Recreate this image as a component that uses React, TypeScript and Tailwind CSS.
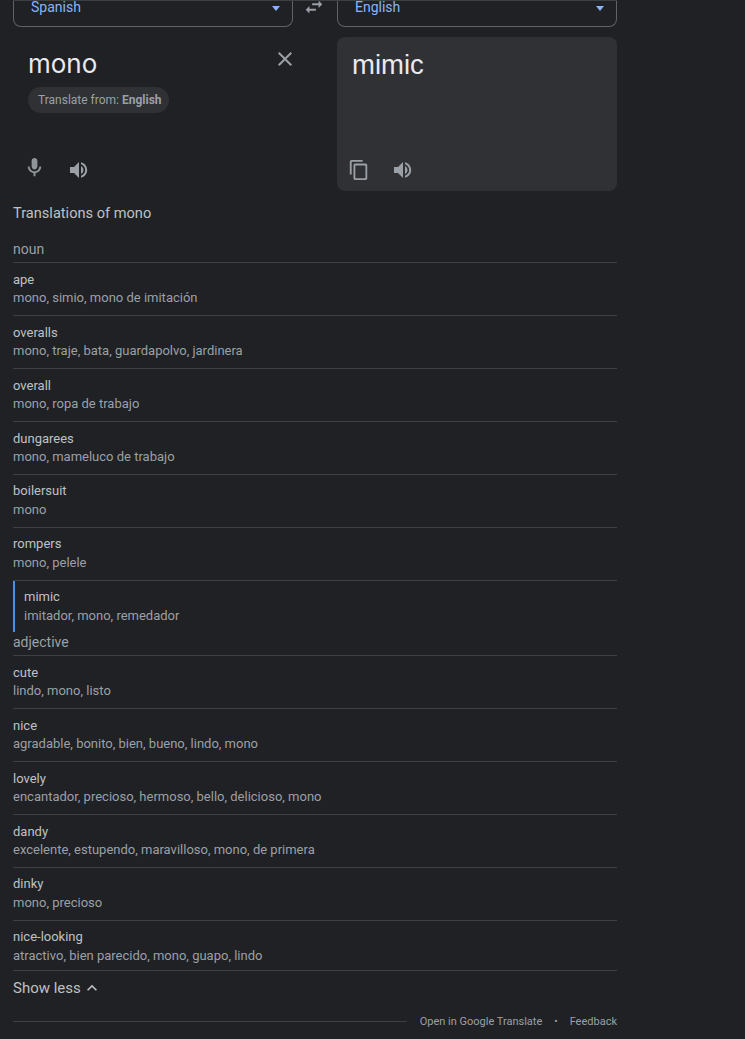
import React from "react";

const ICONS = {
  mic: "M12 14c1.66 0 3-1.34 3-3V5c0-1.66-1.34-3-3-3S9 3.34 9 5v6c0 1.66 1.34 3 3 3z M17 11c0 2.76-2.24 5-5 5s-5-2.24-5-5H5c0 3.53 2.61 6.43 6 6.92V21h2v-3.08c3.39-.49 6-3.39 6-6.92h-2z",
  volume: "M3 9v6h4l5 5V4L7 9H3zm13.5 3c0-1.77-1.02-3.29-2.5-4.03v8.05c1.48-.73 2.5-2.25 2.5-4.02z M14 4.2v2.1c2.4.8 4.2 3 4.2 5.7s-1.8 4.9-4.2 5.7v2.1c3.5-.9 6.2-4 6.2-7.8s-2.7-6.9-6.2-7.8z",
  copy: "M16 1H4c-1.1 0-2 .9-2 2v14h2V3h12V1zm3 4H8c-1.1 0-2 .9-2 2v14c0 1.1.9 2 2 2h11c1.1 0 2-.9 2-2V7c0-1.1-.9-2-2-2zm0 16H8V7h11v14z",
  swap: "M6.99 11L3 15l3.99 4v-3H14v-2H6.99v-3zM21 9l-3.99-4v3H10v2h7.01v3L21 9z",
  close: "M19 6.41L17.59 5 12 10.59 6.41 5 5 6.41 10.59 12 5 17.59 6.41 19 12 13.41 17.59 19 19 17.59 13.41 12z",
  up: "M7.41 15.41L12 10.83l4.59 4.58L18 14l-6-6-6 6z",
};

const Icon: React.FC<{ name: keyof typeof ICONS; className?: string }> = ({ name, className }) => (
  <svg viewBox="0 0 24 24" className={className} fill="currentColor" aria-hidden="true">
    <path d={ICONS[name]} />
  </svg>
);

// tight rows sit a pixel higher in the reference (fractional row heights)
const NOUNS = [
  { word: "ape", list: "mono, simio, mono de imitación" },
  { word: "overalls", list: "mono, traje, bata, guardapolvo, jardinera" },
  { word: "overall", list: "mono, ropa de trabajo" },
  { word: "dungarees", list: "mono, mameluco de trabajo" },
  { word: "boilersuit", list: "mono", tight: true },
  { word: "rompers", list: "mono, pelele", tight: true },
];

const ADJECTIVES = [
  { word: "cute", list: "lindo, mono, listo" },
  { word: "nice", list: "agradable, bonito, bien, bueno, lindo, mono" },
  { word: "lovely", list: "encantador, precioso, hermoso, bello, delicioso, mono" },
  { word: "dandy", list: "excelente, estupendo, maravilloso, mono, de primera" },
  { word: "dinky", list: "mono, precioso", tight: true },
  { word: "nice-looking", list: "atractivo, bien parecido, mono, guapo, lindo", tight: true },
];

const LangSelect: React.FC<{ label: string }> = ({ label }) => (
  <div className="w-[280px] h-[26px] border border-t-0 border-[#5f6368] rounded-b-lg flex items-start justify-between pl-[17px] pr-[12px]">
    <span className="text-[14px] leading-[16px] -mt-[2px] text-[#8ab4f8]">{label}</span>
    <span className="mt-[5px] w-0 h-0 border-x-[4px] border-x-transparent border-t-[5px] border-t-[#8ab4f8]" />
  </div>
);

const Row: React.FC<{ word: string; list: string; tight?: boolean; last?: boolean }> = ({ word, list, tight, last }) => (
  <div className={`${last ? "h-[50px]" : "h-[53px]"} border-b border-[#3c4043] ${tight ? "pt-[7px]" : "pt-[8px]"}`}>
    <div className="text-[13px] leading-[18px] text-[#bdc1c6]">{word}</div>
    <div className={`text-[13px] leading-[18px] text-[#9aa0a6] ${tight ? "mt-[1px]" : ""}`}>{list}</div>
  </div>
);

export default function App() {
  return (
    <div className="min-h-[1039px] bg-[#202124] pl-[13px] font-['Roboto',sans-serif]">
      <div className="w-[604px]">
        <div className="flex items-start border-t border-t-[#3c4043]">
          <LangSelect label="Spanish" />
          <div className="w-[44px] pl-[10px] h-[26px] overflow-hidden">
            <Icon name="swap" className="w-[22px] h-[22px] -mt-[5px] text-[#9aa0a6]" />
          </div>
          <LangSelect label="English" />
        </div>

        <div className="flex justify-between mt-[10px]">
          <div className="relative w-[280px] h-[154px] flex flex-col">
            <div className="pl-[15px] pt-[10px] text-[26px] leading-[34px] text-[#e8eaed] font-['Inter',sans-serif]">mono</div>
            <Icon name="close" className="absolute left-[260px] top-[10px] w-[24px] h-[24px] text-[#9aa0a6]" />
            <div className="ml-[15px] mt-[6px] w-[141px] h-[26px] rounded-full bg-[#303134] pl-[10px] flex items-center text-[12px] text-[#9aa0a6]">
              Translate from:<b className="ml-[3px] font-bold">English</b>
            </div>
            <div className="mt-auto mb-[9px] h-[24px] pl-[10px] flex items-center gap-[21px] text-[#9aa0a6]">
              <Icon name="mic" className="w-[23px] h-[23px] mb-[5px] text-[#8f9499]" />
              <Icon name="volume" className="w-[24px] h-[24px]" />
            </div>
          </div>
          <div className="w-[280px] h-[154px] rounded-lg bg-[#303134] flex flex-col">
            <div className="pl-[15px] pt-[11px] text-[27.5px] leading-[34px] text-[#e8eaed] font-['Liberation_Sans',sans-serif]">mimic</div>
            <div className="mt-auto mb-[9px] h-[24px] pl-[11px] flex items-center gap-[21px] text-[#9aa0a6]">
              <Icon name="copy" className="w-[22px] h-[22px]" />
              <Icon name="volume" className="w-[24px] h-[24px]" />
            </div>
          </div>
        </div>

        <div className="mt-[12px] text-[14.6px] leading-[20px] text-[#bdc1c6]">Translations of mono</div>
        <div className="mt-[16px] h-[24px] border-b border-[#3c4043] text-[14px] leading-[20px] text-[#9aa0a6]">noun</div>
        {NOUNS.map((n) => (
          <Row key={n.word} {...n} />
        ))}
        <div className="h-[51px] border-l-2 border-[#4a8fe7] pl-[9px] pt-[7px]">
          <div className="text-[13px] leading-[18px] text-[#bdc1c6]">mimic</div>
          <div className="mt-[1px] text-[13px] leading-[18px] text-[#9aa0a6]">imitador, mono, remedador</div>
        </div>
        <div className="h-[24px] border-b border-[#3c4043] text-[14px] leading-[20px] text-[#9aa0a6]">adjective</div>
        {ADJECTIVES.map((a, i) => (
          <Row key={a.word} {...a} last={i === ADJECTIVES.length - 1} />
        ))}

        <div className="mt-[7px] h-[20px] flex items-center text-[15px] leading-[20px] text-[#bdc1c6]">
          Show less
          <Icon name="up" className="ml-[1px] w-[20px] h-[20px]" />
        </div>

        <div className="mt-[14px] flex items-center text-[11px] leading-[16px] text-[#9aa0a6]">
          <div className="flex-1 h-px bg-[#3c4043]" />
          <span className="ml-[13px] mt-[2px]">Open in Google Translate</span>
          <span className="mx-[12px] mt-[2px] text-[10px]">•</span>
          <span className="mt-[2px]">Feedback</span>
        </div>
      </div>
    </div>
  );
}
